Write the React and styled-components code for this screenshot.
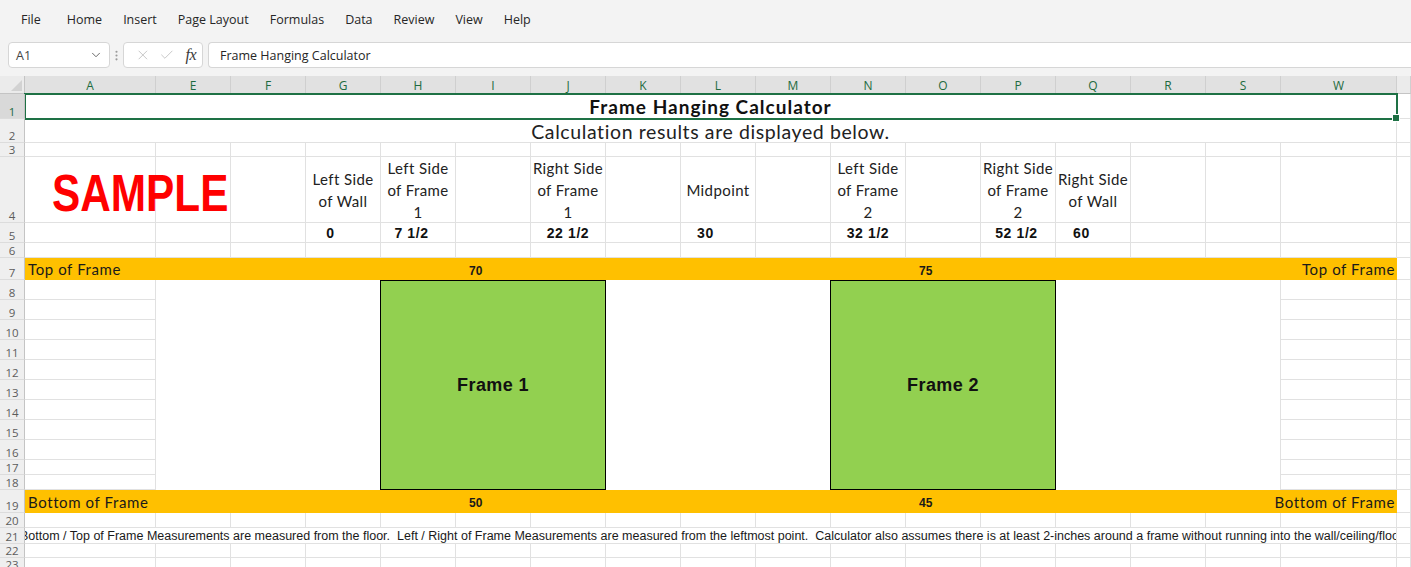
import React from 'react';
import styled, { createGlobalStyle } from 'styled-components';
import { ChevronDown, X, Check, EllipsisVertical } from 'lucide-react';

const GlobalStyle = createGlobalStyle`
  html, body {
    margin: 0;
    padding: 0;
    background: #fff;
    overflow: hidden;
  }
  body {
    font-family: "Liberation Sans", Arial, sans-serif;
  }
`;

const YELLOW = '#ffc000';
const GRID = '#e1e1e1';
const EXCEL_GREEN = '#1e7145';

const Window = styled.div`
  width: 1411px;
  height: 567px;
  overflow: hidden;
  display: flex;
  flex-direction: column;
  background: #f3f3f3;
`;

const MenuBar = styled.nav`
  flex-shrink: 0;
  height: 39px;
  display: flex;
  align-items: center;
  padding-left: 21px;
  gap: 21px;
  font-family: "Open Sans", "Noto Sans", sans-serif;
  font-size: 12.5px;
  color: #262626;
`;

const MenuItem = styled.span`
  &:first-child {
    margin-right: 5px;
  }
`;

const FormulaRow = styled.div`
  flex-shrink: 0;
  height: 26px;
  margin: 3px 0 8px;
  padding-left: 8px;
  display: flex;
  align-items: stretch;
  font-family: "Open Sans", "Noto Sans", sans-serif;
  font-size: 12.5px;
  color: #262626;
`;

const Box = styled.div`
  background: #fff;
  border: 1px solid #d6d6d6;
  border-radius: 4px;
  box-sizing: border-box;
  display: flex;
  align-items: center;
`;

const NameBox = styled(Box)`
  width: 102px;
  padding: 0 6px 0 7px;
  justify-content: space-between;
  color: #444;
`;

const Dots = styled.div`
  width: 13px;
  display: flex;
  align-items: center;
  justify-content: center;
  color: #9a9a9a;
`;

const EditBox = styled(Box)`
  width: 80px;
  padding: 0 6px 0 11px;
  gap: 8px;
  color: #b9b9b9;
`;

const Fx = styled.span`
  font-family: "Liberation Serif", "Times New Roman", serif;
  font-style: italic;
  font-size: 16px;
  color: #3a3a3a;
  margin-left: 3px;
  letter-spacing: -0.5px;
`;

const FormulaInput = styled(Box)`
  flex: 1;
  margin-left: 5px;
  padding-left: 11px;
  border-right: none;
  border-radius: 4px 0 0 4px;
`;

const Sheet = styled.div`
  flex: 1;
  min-height: 0;
  overflow: hidden;
  display: grid;
  grid-template-columns: 25px 131px repeat(15, 75px) 116px 1fr;
  grid-template-rows: 18px 25px 24px 14px 66px 20px 15px 22px repeat(9, 20px) 15px 15px 23px 15px 16px 14px 1fr;
  background: #fff;
`;

const Cell = styled.div`
  grid-column: ${(p) => p.$c} / span ${(p) => p.$cs || 1};
  grid-row: ${(p) => p.$r} / span ${(p) => p.$rs || 1};
  background: ${(p) => p.$bg || '#fff'};
  border-right: ${(p) => (p.$nr ? 'none' : `1px solid ${GRID}`)};
  border-bottom: ${(p) => (p.$nb ? 'none' : `1px solid ${GRID}`)};
  box-sizing: border-box;
  min-width: 0;
`;

const ColHead = styled.div`
  grid-row: 1;
  grid-column: ${(p) => p.$c};
  background: ${(p) => (p.$on ? '#e1e1e1' : '#ebebeb')};
  color: ${(p) => (p.$on ? '#1d6b40' : '#555')};
  border-right: 1px solid #cfcfcf;
  border-bottom: 1px solid #c4c4c4;
  box-sizing: border-box;
  display: flex;
  align-items: center;
  justify-content: center;
  padding-top: 1px;
  font-family: "Open Sans", "Noto Sans", sans-serif;
  font-size: 12px;
`;

const Corner = styled.div`
  grid-row: 1;
  grid-column: 1;
  background: #ebebeb;
  border-right: 1px solid #c4c4c4;
  border-bottom: 1px solid #c4c4c4;
  box-sizing: border-box;
  display: flex;
  align-items: flex-end;
  justify-content: flex-end;
  padding: 0 2px 2px 0;
`;

const CornerMark = styled.div`
  width: 0;
  height: 0;
  border-left: 11px solid transparent;
  border-bottom: 11px solid #d2d2d2;
`;

const RowHead = styled.div`
  grid-column: 1;
  grid-row: ${(p) => p.$r};
  background: ${(p) => (p.$on ? '#d9d9d9' : '#efefef')};
  border-right: 1px solid #c4c4c4;
  border-bottom: 1px solid #dcdcdc;
  box-sizing: border-box;
  display: flex;
  align-items: flex-end;
  justify-content: center;
  font-family: "Open Sans", "Noto Sans", sans-serif;
  font-size: 11.5px;
  line-height: 13px;
  color: ${(p) => (p.$on ? '#1d6b40' : '#5c5c5c')};
  position: relative;
  z-index: 2;
`;

const TitleCell = styled(Cell)`
  outline: 2px solid ${EXCEL_GREEN};
  outline-offset: -1px;
  display: flex;
  align-items: center;
  justify-content: center;
  font-family: "Lato", "Open Sans", sans-serif;
  font-weight: 700;
  font-size: 19px;
  letter-spacing: 1px;
  color: #111;
  position: relative;
  z-index: 1;

  &::after {
    content: '';
    position: absolute;
    right: -4px;
    bottom: -4px;
    width: 6px;
    height: 6px;
    background: ${EXCEL_GREEN};
    border: 1px solid #fff;
  }
`;

const SubtitleCell = styled(Cell)`
  display: flex;
  align-items: center;
  justify-content: center;
  font-family: "Lato", "Open Sans", sans-serif;
  font-size: 19.5px;
  letter-spacing: 0.6px;
  color: #222;
  padding-top: 1px;
`;

const SampleCell = styled(Cell)`
  overflow: visible;
  white-space: nowrap;
  display: flex;
  align-items: center;
  padding: 8px 0 0 27px;
  position: relative;
  z-index: 1;
`;

const SampleText = styled.span`
  display: inline-block;
  font-family: "Liberation Sans", Arial, sans-serif;
  font-weight: 700;
  font-size: 51px;
  color: #ff0000;
  transform: scaleX(0.83);
  transform-origin: left center;
`;

const LabelCell = styled(Cell)`
  display: flex;
  flex-direction: column;
  align-items: center;
  justify-content: center;
  font-family: "Lato", "Open Sans", sans-serif;
  font-size: 15px;
  letter-spacing: 0.4px;
  line-height: 22px;
  color: #222;
  white-space: nowrap;
  overflow: visible;
`;

const ValueCell = styled(Cell)`
  display: flex;
  align-items: center;
  justify-content: center;
  padding-right: ${(p) => p.$pad || 0}px;
  font-family: "Liberation Sans", Arial, sans-serif;
  font-weight: 700;
  font-size: 14px;
  letter-spacing: 0.6px;
  color: #111;
`;

const BandCell = styled(Cell)`
  display: flex;
  align-items: center;
  justify-content: ${(p) => (p.$right ? 'flex-end' : 'flex-start')};
  padding: ${(p) => (p.$right ? '0 2px 0 0' : `0 0 0 ${p.$indent || 3}px`)};
  white-space: nowrap;
  overflow: visible;
  font-family: ${(p) => (p.$num ? '"Liberation Sans", Arial, sans-serif' : '"Lato", "Open Sans", sans-serif')};
  font-weight: ${(p) => (p.$num ? 700 : 400)};
  font-size: ${(p) => (p.$num ? '12px' : '15px')};
  letter-spacing: ${(p) => (p.$num ? '0' : '0.6px')};
  padding-top: ${(p) => (p.$num ? '3px' : '0')};
  color: #1a1a1a;
`;

const FrameBox = styled(Cell)`
  background: #92d050;
  border: 1px solid #000;
  display: flex;
  align-items: center;
  justify-content: center;
  font-family: "Liberation Sans", Arial, sans-serif;
  font-weight: 700;
  font-size: 18px;
  letter-spacing: 0.4px;
  color: #111;
  position: relative;
  z-index: 1;
  margin-left: -1px;
`;

const NoteCell = styled(Cell)`
  overflow: hidden;
  white-space: nowrap;
  display: flex;
  align-items: center;
  font-family: "Liberation Sans", Arial, sans-serif;
  font-size: 12.5px;
  color: #1a1a1a;
  text-indent: -5px;
`;

const COLS = ['A', 'E', 'F', 'G', 'H', 'I', 'J', 'K', 'L', 'M', 'N', 'O', 'P', 'Q', 'R', 'S', 'W', ''];
const colIdx = (letter) => COLS.indexOf(letter) + 2;
const LAST = COLS.length + 1; // grid column of the partial column after W

const HEADERS = {
  G: ['Left Side', 'of Wall'],
  H: ['Left Side', 'of Frame', '1'],
  J: ['Right Side', 'of Frame', '1'],
  L: ['Midpoint'],
  N: ['Left Side', 'of Frame', '2'],
  P: ['Right Side', 'of Frame', '2'],
  Q: ['Right Side', 'of Wall'],
};

const VALUES = {
  G: { v: '0', pad: 25 },
  H: { v: '7 1/2', pad: 13 },
  J: { v: '22 1/2', pad: 0 },
  L: { v: '30', pad: 25 },
  N: { v: '32 1/2', pad: 0 },
  P: { v: '52 1/2', pad: 3 },
  Q: { v: '60', pad: 23 },
};

const plainRow = (row, from = 2, to = LAST) =>
  Array.from({ length: to - from + 1 }, (_, i) => (
    <Cell key={`p${row}-${from + i}`} $c={from + i} $r={row + 1} />
  ));

const band = (row, left, right, n1, n2) => {
  const out = [];
  for (let c = 2; c <= LAST - 1; c += 1) {
    const letter = COLS[c - 2];
    let content = null;
    let props = {};
    if (letter === 'A') content = left;
    if (letter === 'I') { content = n1; props = { $num: true, $indent: 13 }; }
    if (letter === 'O') { content = n2; props = { $num: true, $indent: 13 }; }
    if (letter === 'W') { content = right; props = { $right: true }; }
    out.push(
      <BandCell key={`b${row}-${c}`} $c={c} $r={row + 1} $bg={YELLOW} $nr $nb {...props}>
        {content}
      </BandCell>
    );
  }
  out.push(<Cell key={`b${row}-x`} $c={LAST} $r={row + 1} />);
  return out;
};

const MENU = ['File', 'Home', 'Insert', 'Page Layout', 'Formulas', 'Data', 'Review', 'View', 'Help'];

export default function App() {
  const rows = [];

  // row 1 & 2
  rows.push(<TitleCell key="title" $c={2} $cs={17} $r={2}>Frame Hanging Calculator</TitleCell>);
  rows.push(<Cell key="r1x" $c={LAST} $r={2} />);
  rows.push(<SubtitleCell key="sub" $c={2} $cs={17} $r={3}>Calculation results are displayed below.</SubtitleCell>);
  rows.push(<Cell key="r2x" $c={LAST} $r={3} />);

  // row 3
  rows.push(...plainRow(3));

  // row 4 headers
  COLS.forEach((letter, i) => {
    const c = i + 2;
    if (letter === 'A') {
      rows.push(
        <SampleCell key="sample" $c={c} $r={5}>
          <SampleText>SAMPLE</SampleText>
        </SampleCell>
      );
    } else if (HEADERS[letter]) {
      rows.push(
        <LabelCell key={`h${letter}`} $c={c} $r={5}>
          {HEADERS[letter].map((t) => <span key={t}>{t}</span>)}
        </LabelCell>
      );
    } else {
      rows.push(<Cell key={`h4-${c}`} $c={c} $r={5} />);
    }
  });

  // row 5 values
  COLS.forEach((letter, i) => {
    const c = i + 2;
    const val = VALUES[letter];
    rows.push(
      <ValueCell key={`v${c}`} $c={c} $r={6} $pad={val ? val.pad : 0}>
        {val ? val.v : null}
      </ValueCell>
    );
  });

  // row 6
  rows.push(...plainRow(6));

  // row 7 band
  rows.push(...band(7, 'Top of Frame', 'Top of Frame', '70', '75'));

  // rows 8-18
  for (let r = 8; r <= 18; r += 1) {
    rows.push(<Cell key={`a${r}`} $c={2} $r={r + 1} />);
    rows.push(<Cell key={`w${r}`} $c={colIdx('W')} $r={r + 1} />);
    rows.push(<Cell key={`x${r}`} $c={LAST} $r={r + 1} />);
  }
  rows.push(<Cell key="wall" $c={3} $cs={15} $r={9} $rs={11} $nb />);
  rows.push(<FrameBox key="f1" $c={colIdx('H')} $cs={3} $r={9} $rs={11}>Frame 1</FrameBox>);
  rows.push(<FrameBox key="f2" $c={colIdx('N')} $cs={3} $r={9} $rs={11}>Frame 2</FrameBox>);

  // row 19 band
  rows.push(...band(19, 'Bottom of Frame', 'Bottom of Frame', '50', '45'));

  // row 20-23
  rows.push(...plainRow(20));
  rows.push(
    <NoteCell key="note" $c={2} $cs={17} $r={22}>
      Bottom / Top of Frame Measurements are measured from the floor.&nbsp; Left / Right of Frame Measurements are measured from the leftmost point.&nbsp; Calculator also assumes there is at least 2-inches around a frame without running into the wall/ceiling/floor
    </NoteCell>
  );
  rows.push(<Cell key="r21x" $c={LAST} $r={22} />);
  rows.push(...plainRow(22));
  rows.push(...plainRow(23));

  return (
    <>
      <GlobalStyle />
      <Window>
        <MenuBar>
          {MENU.map((m) => <MenuItem key={m}>{m}</MenuItem>)}
        </MenuBar>
        <FormulaRow>
          <NameBox>
            <span>A1</span>
            <ChevronDown size={14} strokeWidth={1.5} color="#555" />
          </NameBox>
          <Dots>
            <EllipsisVertical size={13} strokeWidth={2} />
          </Dots>
          <EditBox>
            <X size={16} strokeWidth={1.2} />
            <Check size={16} strokeWidth={1.2} />
            <Fx>fx</Fx>
          </EditBox>
          <FormulaInput>Frame Hanging Calculator</FormulaInput>
        </FormulaRow>
        <Sheet>
          <Corner><CornerMark /></Corner>
          {COLS.map((letter, i) => (
            <ColHead key={`ch${i}`} $c={i + 2} $on={letter !== ''}>{letter}</ColHead>
          ))}
          {Array.from({ length: 23 }, (_, i) => (
            <RowHead key={`rh${i}`} $r={i + 2} $on={i === 0}>{i + 1}</RowHead>
          ))}
          {rows}
        </Sheet>
      </Window>
    </>
  );
}
